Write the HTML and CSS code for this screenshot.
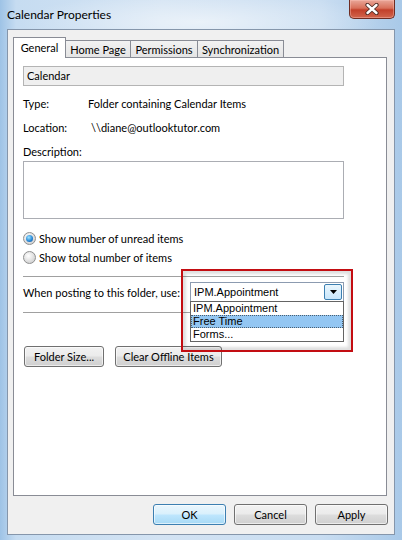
FILE: index.html
```html
<!DOCTYPE html>
<html lang="en">
<head>
    <meta charset="UTF-8">
    <meta name="viewport" content="width=device-width, initial-scale=1.0">
    <title>Calendar Properties</title>
    <link rel="stylesheet" href="styles.css">
</head>
<body>
    <div class="window">
        <div class="titlebar">
            <span class="title">Calendar Properties</span>
            <div class="close-btn">
                <svg width="14" height="12" viewBox="0 0 14 12">
                    <path d="M2.5 2 L11.5 10 M11.5 2 L2.5 10" stroke="#4a2a24" stroke-width="4.2" stroke-linecap="round"/>
                    <path d="M2.5 2 L11.5 10 M11.5 2 L2.5 10" stroke="#ffffff" stroke-width="2.4" stroke-linecap="round"/>
                </svg>
            </div>
        </div>

        <div class="client">
            <div class="tabs">
                <div class="tab tab-active">General</div>
                <div class="tab tab-home">Home Page</div>
                <div class="tab tab-perm">Permissions</div>
                <div class="tab tab-sync">Synchronization</div>
            </div>

            <div class="panel">
                <div class="name-box">Calendar</div>

                <div class="info-row">
                    <span class="info-label">Type:</span>
                    <span>Folder containing Calendar Items</span>
                </div>
                <div class="info-row">
                    <span class="info-label">Location:</span>
                    <span class="location">\\diane@outlooktutor.com</span>
                </div>
                <div class="info-row desc-label">Description:</div>
                <div class="desc-box"></div>

                <div class="radio-group">
                    <div class="radio"><span class="radio-dot checked"></span>Show number of unread items</div>
                    <div class="radio"><span class="radio-dot"></span>Show total number of items</div>
                </div>

                <div class="separator"></div>

                <div class="post-row">
                    <span class="post-label">When posting to this folder, use:</span>
                    <div class="combo-wrap">
                        <div class="combo">
                            <span>IPM.Appointment</span>
                            <span class="combo-arrow">
                                <svg width="7" height="4" viewBox="0 0 7 4"><path d="M0 0 H7 L3.5 4 Z" fill="#000"/></svg>
                            </span>
                        </div>
                        <ul class="combo-list">
                            <li>IPM.Appointment</li>
                            <li class="selected">Free Time</li>
                            <li>Forms...</li>
                        </ul>
                        <div class="callout"></div>
                    </div>
                </div>

                <div class="separator sep-lower"></div>

                <div class="folder-buttons">
                    <button class="btn btn-folder">Folder Size...</button>
                    <button class="btn btn-clear">Clear Offline Items</button>
                </div>
            </div>

            <div class="dialog-buttons">
                <button class="btn btn-default">OK</button>
                <button class="btn">Cancel</button>
                <button class="btn">Apply</button>
            </div>
        </div>
    </div>
</body>
</html>
```
FILE: styles.css
```css
body {
    margin: 0;
    font-family: Lato, 'Noto Sans', sans-serif;
    font-size: 11px;
    color: #000;
}

.window {
    width: 402px;
    height: 540px;
    display: flex;
    flex-direction: column;
    background:
        radial-gradient(ellipse 180px 30px at 200px 22px, rgba(255, 255, 255, 0.55), rgba(255, 255, 255, 0)),
        linear-gradient(90deg, #9ec3e6 0%, #c6dcf1 4%, #d3e3f3 40%, #c9ddf1 80%, #a9c9e8 100%);
}

/* title bar */
.titlebar {
    height: 29px;
    display: flex;
    justify-content: space-between;
    align-items: flex-start;
    padding: 0 7px 0 7px;
}

.title {
    margin-top: 7px;
    line-height: 15px;
    font-size: 12px;
    color: #000;
}

.close-btn {
    width: 44px;
    height: 18px;
    border: 1px solid #6e2c22;
    border-top: none;
    border-radius: 0 0 5px 5px;
    background: linear-gradient(#e9a799 0%, #d8705a 45%, #c2402a 55%, #d1654d 100%);
    box-shadow: inset 0 0 0 1px rgba(255, 200, 190, 0.4);
    display: flex;
    justify-content: center;
    align-items: center;
}

/* client area */
.client {
    flex: 1;
    margin: 0 7px 5px 7px;
    border: 1px solid #8596ab;
    background: #f0f0f0;
    padding: 7px 7px 9px 5px;
    display: flex;
    flex-direction: column;
}

.tabs {
    display: flex;
    height: 20px;
    position: relative;
    z-index: 1;
}

.tab {
    box-sizing: border-box;
    height: 17px;
    margin-top: 3px;
    margin-left: -1px;
    border: 1px solid #898c95;
    border-bottom: none;
    background: linear-gradient(#f2f2f2, #e4e4e4);
    line-height: 15px;
    padding-top: 1px;
    text-align: center;
}

.tab-active {
    height: 21px;
    margin-top: 0;
    margin-left: 0;
    width: 53px;
    background: #fff;
    padding-top: 2px;
}

.tab-home { width: 66px; }
.tab-perm { width: 68px; }
.tab-sync { width: 87px; }

.panel {
    flex: 1;
    border: 1px solid #898c95;
    background: #fff;
    padding: 8px 0 0 9px;
}

.name-box {
    box-sizing: border-box;
    width: 321px;
    height: 20px;
    border: 1px solid #b4b4b4;
    background: #efefef;
    padding-left: 3px;
    line-height: 17px;
    margin-bottom: 6px;
}

.info-row {
    display: flex;
    line-height: 24px;
}

.info-label {
    width: 65px;
}

.location {
    padding-left: 3px;
}

.desc-label {
    margin-bottom: -3px;
}

.desc-box {
    box-sizing: border-box;
    width: 321px;
    height: 58px;
    border: 1px solid #abadb3;
    background: #fff;
}

.radio-group {
    margin-top: 10px;
}

.radio {
    display: flex;
    align-items: center;
    height: 19px;
}

.radio-dot {
    box-sizing: border-box;
    width: 13px;
    height: 13px;
    margin-right: 3px;
    border: 1px solid #8e8f8f;
    border-radius: 50%;
    background: radial-gradient(circle at 40% 35%, #ffffff, #d6d6d6 70%, #c4c4c4);
    display: flex;
    justify-content: center;
    align-items: center;
}

.radio-dot.checked::after {
    content: "";
    width: 7px;
    height: 7px;
    border-radius: 50%;
    background: radial-gradient(circle at 40% 35%, #9ee4ff, #2a8ad8 55%, #0b4a94);
}

.separator {
    width: 321px;
    height: 1px;
    background: #a0a0a0;
    margin-top: 9px;
}

.post-row {
    display: flex;
    align-items: center;
    justify-content: space-between;
    width: 321px;
    height: 20px;
    margin-top: 5px;
}

.post-label {
    white-space: nowrap;
}

.combo-wrap {
    position: relative;
    flex-shrink: 0;
    width: 154px;
    height: 20px;
}

.combo {
    box-sizing: border-box;
    height: 20px;
    border: 1px solid #8c9bb0;
    background: #fff;
    display: flex;
    justify-content: space-between;
    align-items: center;
    padding: 0 1px 0 3px;
    font-family: 'Liberation Sans', Arial, sans-serif;
    font-size: 11px;
}

.combo-arrow {
    box-sizing: border-box;
    width: 18px;
    height: 16px;
    border: 1px solid #3c7fb1;
    border-radius: 2px;
    background: linear-gradient(#eaf6fd, #c8e6fb);
    display: flex;
    justify-content: center;
    align-items: center;
}

/* opened drop-down list */
.combo-list {
    position: absolute;
    top: 19px;
    left: 0;
    box-sizing: border-box;
    width: 154px;
    margin: 0;
    padding: 0;
    list-style: none;
    border: 1px solid #646464;
    background: #fff;
    font-family: 'Liberation Sans', Arial, sans-serif;
    font-size: 11px;
    z-index: 2;
}

.combo-list li {
    height: 13px;
    line-height: 13px;
    padding-left: 2px;
}

.combo-list li.selected {
    background: #93c6f2;
    outline: 1px dotted #4a5e70;
    outline-offset: -1px;
}

/* red highlight frame round the list */
.callout {
    position: absolute;
    top: -13px;
    left: -9px;
    width: 168px;
    height: 79px;
    border: 2px solid #c30d12;
    box-shadow: inset 0 0 3px 3px rgba(0, 0, 0, 0.13);
    z-index: 3;
    pointer-events: none;
}

.sep-lower {
    margin-top: 10px;
}

.folder-buttons {
    display: flex;
    gap: 11px;
    margin: 33px 0 0 1px;
}

.btn {
    box-sizing: border-box;
    height: 21px;
    padding: 0;
    border: 1px solid #707070;
    border-radius: 3px;
    background: linear-gradient(#f2f2f2 0%, #ebebeb 48%, #dddddd 52%, #cfcfcf 100%);
    box-shadow: inset 0 0 0 1px rgba(255, 255, 255, 0.6);
    font-family: inherit;
    font-size: 11px;
    color: #000;
    width: 73px;
}

.btn-folder { width: 80px; }
.btn-clear { width: 107px; }

.btn-default {
    border-color: #3c7fb1;
    background: linear-gradient(#eaf6fd 0%, #d9f0fc 48%, #bee6fd 52%, #a7d9f5 100%);
}

.dialog-buttons {
    display: flex;
    justify-content: flex-end;
    gap: 8px;
    margin-top: 8px;
    margin-right: -1px;
}
```
